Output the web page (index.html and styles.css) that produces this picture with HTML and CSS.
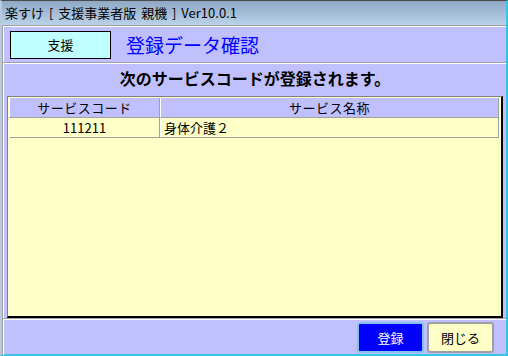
FILE: index.html
```html
<!DOCTYPE html>
<html lang="ja">
<head>
    <meta charset="UTF-8">
    <meta name="viewport" content="width=device-width, initial-scale=1.0">
    <title>登録データ確認</title>
    <link rel="stylesheet" href="styles.css">
</head>
<body>
    <div class="window">
        <div class="titlebar">楽すけ [ 支援事業者版 親機 ] Ver10.0.1</div>

        <div class="frame">
            <div class="header">
                <div class="tag">支援</div>
                <h1>登録データ確認</h1>
            </div>

            <div class="content">
                <p class="message">次のサービスコードが登録されます。</p>

                <div class="grid-box">
                    <table class="grid">
                        <thead>
                            <tr>
                                <th class="col-code">サービスコード</th>
                                <th>サービス名称</th>
                            </tr>
                        </thead>
                        <tbody>
                            <tr>
                                <td class="code">111211</td>
                                <td>身体介護２</td>
                            </tr>
                        </tbody>
                    </table>
                </div>
            </div>

            <div class="footer">
                <button type="button" class="btn btn-primary">登録</button>
                <button type="button" class="btn">閉じる</button>
            </div>
        </div>
    </div>
</body>
</html>
```

FILE: styles.css
```css
:root {
    --lavender: #c0c0ff;
    --paper: #ffffc8;
    --line: #a0a0a0;
    --edge: #38c4e4;
}

* {
    margin: 0;
    padding: 0;
    box-sizing: border-box;
}

body {
    font-family: "Noto Sans CJK JP", sans-serif;
    font-size: 13px;
    color: #000;
    background: #fff;
}

.window {
    width: 508px;
    height: 356px;
    display: flex;
    flex-direction: column;
    background-color: var(--lavender);
    border-top: 1px solid #4a4a4a;
    border-left: 2px solid #b8cade;
    border-right: 2px solid var(--edge);
    border-bottom: 2px solid var(--edge);
}

.titlebar {
    height: 24px;
    line-height: 24px;
    padding-left: 3px;
    font-size: 13px;
    word-spacing: 2px;
    background: linear-gradient(#8fa8c6, #bad2e8);
    white-space: nowrap;
}

.frame {
    flex: 1;
    display: flex;
    flex-direction: column;
    border-left: 1px solid var(--line);
    box-shadow: inset 1px 0 0 #fff;
}

.header {
    display: flex;
    align-items: center;
    height: 38px;
    padding-left: 7px;
    border-top: 1px solid var(--line);
    box-shadow: inset 0 1px 0 #fff;
    border-bottom: 1px solid var(--line);
}

.tag {
    width: 101px;
    height: 28px;
    margin-top: 1px;
    line-height: 25px;
    text-align: center;
    background-color: #c0ffff;
    border: 1.5px solid #000;
}

.header h1 {
    margin-left: 15px;
    margin-top: 1px;
    font-size: 19px;
    font-weight: normal;
    color: #0000ff;
}

.content {
    border-top: 1px solid #fff;
    padding: 2px 3px 0 4px;
}

.message {
    height: 24px;
    line-height: 24px;
    margin-bottom: 6px;
    text-align: center;
    font-size: 16px;
    font-weight: bold;
}

.grid-box {
    height: 222px;
    background-color: var(--paper);
    border-top: 1px solid #808080;
    border-left: 1px solid #808080;
    border-right: 2px solid #000;
    border-bottom: 2px solid #000;
    padding: 1px 2px 0 1px;
}

.grid {
    width: 100%;
    table-layout: fixed;
    border-collapse: separate;
    border-spacing: 0;
}

.grid th,
.grid td {
    height: 20px;
    padding: 0 3px;
    font-weight: normal;
    white-space: nowrap;
    border-right: 1px solid var(--line);
    border-bottom: 1px solid var(--line);
}

.grid th {
    height: 19px;
    background-color: var(--lavender);
    text-align: center;
    letter-spacing: 0.5px;
    border-left: 1px solid #fff;
}

.grid td {
    border-left: 1px solid #fff;
}

.grid .col-code {
    width: 151px;
}

.grid .code {
    text-align: center;
}

.footer {
    display: flex;
    justify-content: flex-end;
    gap: 3px;
    margin-top: auto;
    height: 37px;
    padding: 3px 12px 0 0;
    border-top: 1px solid var(--line);
    box-shadow: inset 0 1px 0 #fff;
}

.btn {
    width: 67px;
    height: 31px;
    font-family: inherit;
    font-size: 13px;
    background-color: var(--paper);
    border: 2px solid var(--line);
    border-radius: 3px;
    cursor: pointer;
}

.btn-primary {
    background-color: #0000ff;
    border-color: #7cc4ee;
    color: #fff;
}
```
